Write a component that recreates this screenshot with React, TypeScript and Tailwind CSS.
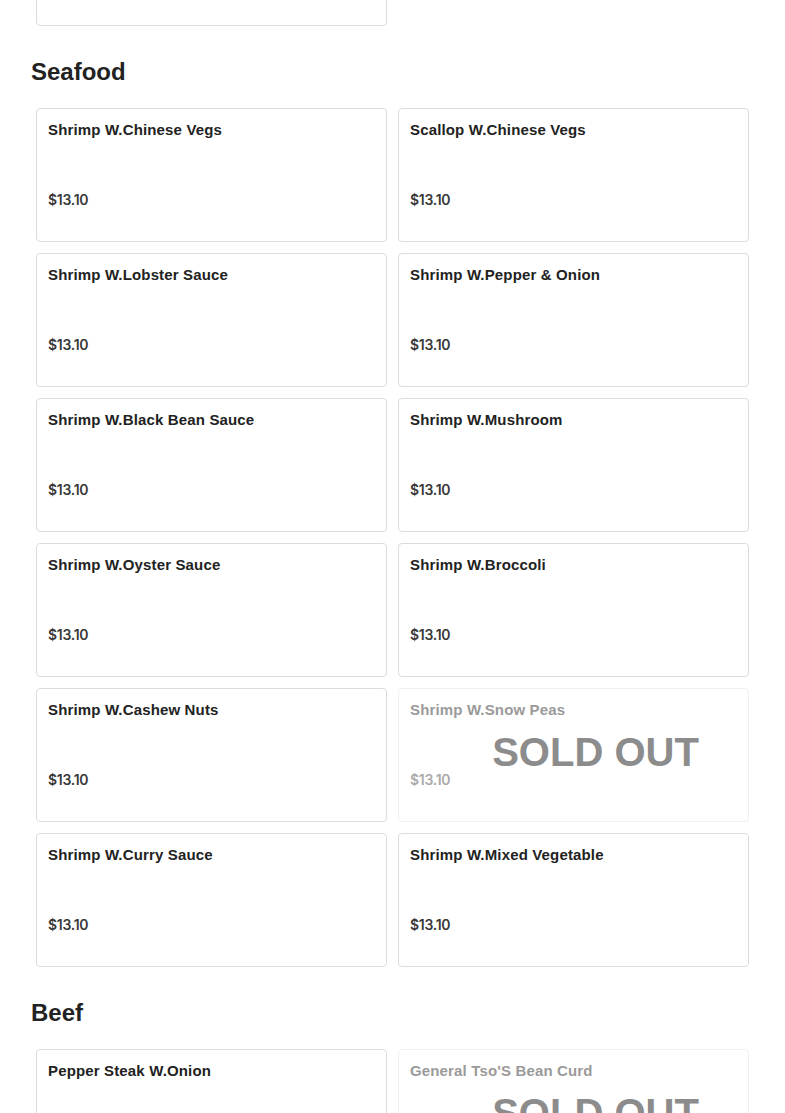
import React from 'react';

interface Dish {
  name: string;
  price: string;
  soldOut?: boolean;
}

interface Section {
  title: string;
  items: Dish[];
}

const sections: Section[] = [
  {
    title: 'Seafood',
    items: [
      { name: 'Shrimp W.Chinese Vegs', price: '$13.10' },
      { name: 'Scallop W.Chinese Vegs', price: '$13.10' },
      { name: 'Shrimp W.Lobster Sauce', price: '$13.10' },
      { name: 'Shrimp W.Pepper & Onion', price: '$13.10' },
      { name: 'Shrimp W.Black Bean Sauce', price: '$13.10' },
      { name: 'Shrimp W.Mushroom', price: '$13.10' },
      { name: 'Shrimp W.Oyster Sauce', price: '$13.10' },
      { name: 'Shrimp W.Broccoli', price: '$13.10' },
      { name: 'Shrimp W.Cashew Nuts', price: '$13.10' },
      { name: 'Shrimp W.Snow Peas', price: '$13.10', soldOut: true },
      { name: 'Shrimp W.Curry Sauce', price: '$13.10' },
      { name: 'Shrimp W.Mixed Vegetable', price: '$13.10' },
    ],
  },
  {
    title: 'Beef',
    items: [
      { name: 'Pepper Steak W.Onion', price: '$13.10' },
      { name: "General Tso'S Bean Curd", price: '$13.10', soldOut: true },
    ],
  },
];

const DishCard: React.FC<{ dish: Dish }> = ({ dish }) => (
  <div
    className={`relative h-[134px] rounded-[4px] border bg-white px-[11px] pt-[12px] ${
      dish.soldOut ? 'border-[#f0f0f0]' : 'border-[#dcdcdc]'
    }`}
  >
    <div
      className={`text-[15px] leading-[18px] font-bold tracking-[0.15px] ${
        dish.soldOut ? 'text-[#9a9a9a]' : 'text-[#222]'
      }`}
    >
      {dish.name}
    </div>
    <div
      className={`mt-[52px] text-[14px] leading-[17px] font-semibold tracking-[-0.3px] ${
        dish.soldOut ? 'text-[#aaa]' : 'text-[#3a3a3a]'
      }`}
      style={{ fontFamily: 'Inter, sans-serif' }}
    >
      {dish.price}
    </div>
    {dish.soldOut && (
      <div className="absolute inset-0 flex items-center justify-center pl-[44px] pb-[6px]">
        <span className="text-[40px] leading-[40px] font-bold text-[#8c8c8c]">SOLD OUT</span>
      </div>
    )}
  </div>
);

export default function App() {
  return (
    <div
      className="min-h-screen bg-white overflow-hidden"
      style={{ fontFamily: '"Liberation Sans", Arial, sans-serif' }}
    >
      <div className="px-[36px]">
        <div className="grid grid-cols-2 gap-[11px] -mt-[108px]">
          <div className="h-[134px] rounded-[4px] border border-[#dcdcdc] bg-white" />
        </div>
      </div>
      {sections.map((section) => (
        <div key={section.title}>
          <h2 className="px-[31px] pt-[32px] pb-[22px] text-[24px] leading-[28px] font-bold text-[#222]">
            {section.title}
          </h2>
          <div className="px-[36px] grid grid-cols-2 gap-[11px]">
            {section.items.map((dish) => (
              <DishCard key={dish.name} dish={dish} />
            ))}
          </div>
        </div>
      ))}
    </div>
  );
}
